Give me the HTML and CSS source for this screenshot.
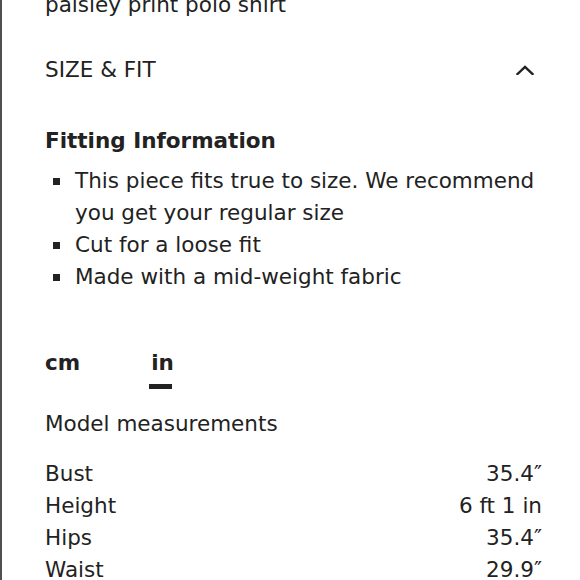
FILE: index.html
```html
<!DOCTYPE html>
<html lang="en">
<head>
<meta charset="utf-8">
<title>Size &amp; Fit</title>
<link rel="stylesheet" href="styles.css">
</head>
<body>
<div class="page">
  <div class="product-title">paisley print polo shirt</div>
  <div class="section-header">
    <span class="section-title">SIZE &amp; FIT</span>
    <svg class="chevron" width="18" height="10" viewBox="0 0 18 10" aria-hidden="true">
      <polyline points="1.5,9 9,1.8 16.5,9" fill="none" stroke="#222" stroke-width="2.4" stroke-linecap="square" stroke-linejoin="miter"/>
    </svg>
  </div>
  <h3 class="fit-heading">Fitting Information</h3>
  <ul class="fit-list">
    <li>This piece fits true to size. We recommend you get your regular size</li>
    <li>Cut for a loose fit</li>
    <li>Made with a mid-weight fabric</li>
  </ul>
  <div class="unit-tabs">
    <span class="unit-tab">cm</span>
    <span class="unit-tab active">in</span>
  </div>
  <div class="model-title">Model measurements</div>
  <dl class="measurements">
    <div class="row"><dt>Bust</dt><dd>35.4″</dd></div>
    <div class="row"><dt>Height</dt><dd>6 ft 1 in</dd></div>
    <div class="row"><dt>Hips</dt><dd>35.4″</dd></div>
    <div class="row"><dt>Waist</dt><dd>29.9″</dd></div>
  </dl>
</div>
</body>
</html>
```
FILE: styles.css
```css
html, body {
  margin: 0;
  padding: 0;
  background: #fff;
}
body {
  height: 580px;
  overflow: hidden;
  border-left: 2px solid #505050;
  font-family: "DejaVu Sans", "Liberation Sans", sans-serif;
  font-size: 21.5px;
  line-height: 32px;
  color: #222;
}
.page {
  padding: 0 38px 0 43px;
}
.product-title {
  margin-top: -11px;
}
.section-header {
  display: flex;
  justify-content: space-between;
  align-items: center;
  margin-top: 33px;
}
.chevron {
  display: block;
  margin-right: 8px;
}
.fit-heading {
  margin: 39px 0 0;
  font-size: 21.5px;
  font-weight: bold;
  line-height: 32px;
}
.fit-list {
  list-style: none;
  margin: 8px 0 0;
  padding: 0 0 0 30px;
}
.fit-list li {
  position: relative;
}
.fit-list li::before {
  content: "";
  position: absolute;
  left: -22px;
  top: 13px;
  width: 7px;
  height: 7px;
  background: #222;
}
.unit-tabs {
  display: flex;
  gap: 71px;
  margin-top: 54px;
}
.unit-tab {
  font-weight: bold;
}
.unit-tab.active {
  position: relative;
}
.unit-tab.active::after {
  content: "";
  position: absolute;
  left: -2px;
  top: 37px;
  width: 23px;
  height: 5px;
  background: #222;
}
.model-title {
  margin-top: 29px;
}
.measurements {
  margin: 18px 0 0;
}
.row {
  display: flex;
  justify-content: space-between;
}
.row dt, .row dd {
  margin: 0;
}
```
